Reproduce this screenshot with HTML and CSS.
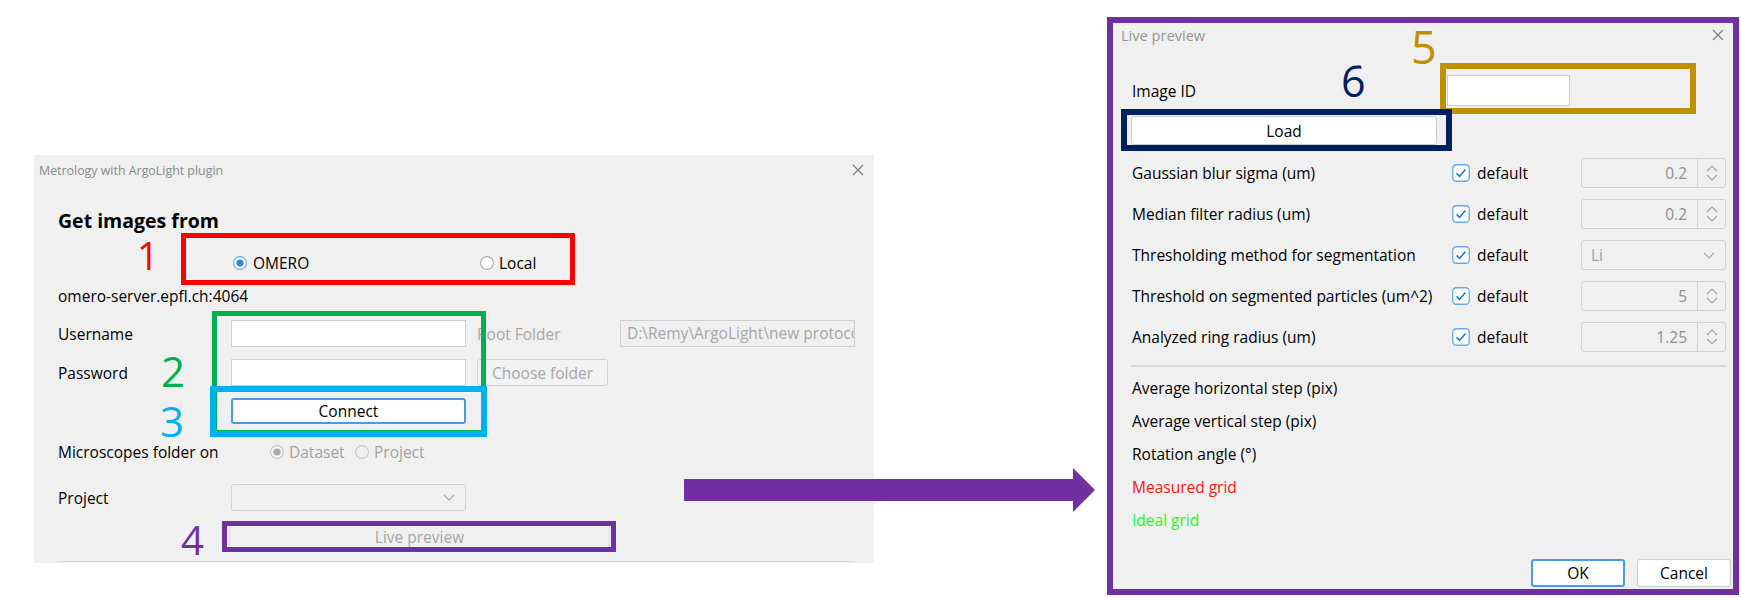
FILE: index.html
```html
<!DOCTYPE html>
<html>
<head>
<meta charset="utf-8">
<title>Metrology with ArgoLight plugin</title>
<link rel="stylesheet" href="styles.css">
</head>
<body>
<div class="canvas">

  <section class="dlg dlg-main">
    <header class="titlebar">
      <span class="title">Metrology with ArgoLight plugin</span>
      <svg class="close" width="12" height="12" viewBox="0 0 12 12"><path d="M1 1L11 11M11 1L1 11" stroke="#7a7a7a" stroke-width="1.1" fill="none"/></svg>
    </header>
    <div class="main-body">
      <div class="row r-get"><h2 class="heading">Get images from</h2></div>
      <div class="row r-radio">
        <span></span>
        <div class="radios">
          <span class="radio radio-omero"><svg width="14" height="14" viewBox="0 0 14 14"><circle cx="7" cy="7" r="6.4" fill="#fff" stroke="#6aa8ec" stroke-width="1.1"/><circle cx="7" cy="7" r="3.6" fill="#2f86e4"/></svg><span>OMERO</span></span>
          <span class="radio"><svg width="14" height="14" viewBox="0 0 14 14"><circle cx="7" cy="7" r="6.4" fill="#fff" stroke="#a8a8a8" stroke-width="1.1"/></svg><span>Local</span></span>
        </div>
      </div>
      <div class="row r-server"><span class="label-wide">omero-server.epfl.ch:4064</span></div>
      <div class="row r-user">
        <span>Username</span>
        <span class="input"></span>
        <span></span>
        <span class="muted">Root Folder</span>
        <span class="field-disabled">D:\Remy\ArgoLight\new protocol\images</span>
      </div>
      <div class="row r-pass">
        <span>Password</span>
        <span class="input"></span>
        <span></span>
        <span class="btn-disabled btn-choose">Choose folder</span>
      </div>
      <div class="row r-connect">
        <span></span>
        <span class="btn btn-focus btn-connect">Connect</span>
      </div>
      <div class="row r-micro">
        <span class="label-nowrap">Microscopes folder on</span>
        <div class="radios radios-disabled">
          <span class="radio radio-dataset"><svg width="14" height="14" viewBox="0 0 14 14"><circle cx="7" cy="7" r="6.4" fill="#f6f6f6" stroke="#c4c4c4" stroke-width="1.1"/><circle cx="7" cy="7" r="3.6" fill="#a9a9a9"/></svg><span>Dataset</span></span>
          <span class="radio"><svg width="14" height="14" viewBox="0 0 14 14"><circle cx="7" cy="7" r="6.4" fill="none" stroke="#c8c8c8" stroke-width="1.1"/></svg><span>Project</span></span>
        </div>
      </div>
      <div class="row r-project">
        <span>Project</span>
        <span class="combo combo-disabled combo-project"><span></span><svg width="12" height="7" viewBox="0 0 12 7"><path d="M1 1L6 6L11 1" stroke="#a6a6a6" stroke-width="1.1" fill="none"/></svg></span>
      </div>
      <div class="row r-live">
        <span></span>
        <span class="btn-disabled btn-live">Live preview</span>
      </div>
      <div class="separator sep-main"></div>
    </div>

    <div class="mark mark-red"></div>
    <div class="mark mark-green"></div>
    <div class="mark mark-blue"></div>
    <div class="mark mark-purple"></div>
    <span class="num num-1">1</span>
    <span class="num num-2">2</span>
    <span class="num num-3">3</span>
    <span class="num num-4">4</span>
  </section>

  <svg class="arrow" width="411" height="44" viewBox="0 0 411 44"><path d="M0 11H389V0L411 22L389 44V33H0Z" fill="#7030a0"/></svg>

  <section class="dlg dlg-preview">
    <header class="titlebar titlebar-preview">
      <span class="title title-preview">Live preview</span>
      <svg class="close" width="12" height="12" viewBox="0 0 12 12"><path d="M1 1L11 11M11 1L1 11" stroke="#7a7a7a" stroke-width="1.1" fill="none"/></svg>
    </header>
    <div class="preview-body">
      <div class="prow r-imageid">
        <span>Image ID</span>
        <span class="input input-id"></span>
      </div>
      <div class="prow r-load">
        <span class="btn btn-load">Load</span>
      </div>

      <div class="param r-first">
        <span>Gaussian blur sigma (um)</span>
        <span class="check"><svg width="18" height="18" viewBox="0 0 18 18"><rect x="0.75" y="0.75" width="16.5" height="16.5" rx="3.5" fill="#fff" stroke="#66a8ec" stroke-width="1.3"/><path d="M4.6 9.4L7.6 12.4L13.4 5.6" stroke="#1e74d8" stroke-width="1.6" fill="none"/></svg><span>default</span></span>
        <span class="spin"><span class="spin-val">0.2</span><span class="spin-btn"><svg width="12" height="18" viewBox="0 0 12 18"><path d="M1 7L6 2L11 7M1 11L6 16L11 11" stroke="#a3a3a3" stroke-width="1.1" fill="none"/></svg></span></span>
      </div>
      <div class="param">
        <span>Median filter radius (um)</span>
        <span class="check"><svg width="18" height="18" viewBox="0 0 18 18"><rect x="0.75" y="0.75" width="16.5" height="16.5" rx="3.5" fill="#fff" stroke="#66a8ec" stroke-width="1.3"/><path d="M4.6 9.4L7.6 12.4L13.4 5.6" stroke="#1e74d8" stroke-width="1.6" fill="none"/></svg><span>default</span></span>
        <span class="spin"><span class="spin-val">0.2</span><span class="spin-btn"><svg width="12" height="18" viewBox="0 0 12 18"><path d="M1 7L6 2L11 7M1 11L6 16L11 11" stroke="#a3a3a3" stroke-width="1.1" fill="none"/></svg></span></span>
      </div>
      <div class="param">
        <span>Thresholding method for segmentation</span>
        <span class="check"><svg width="18" height="18" viewBox="0 0 18 18"><rect x="0.75" y="0.75" width="16.5" height="16.5" rx="3.5" fill="#fff" stroke="#66a8ec" stroke-width="1.3"/><path d="M4.6 9.4L7.6 12.4L13.4 5.6" stroke="#1e74d8" stroke-width="1.6" fill="none"/></svg><span>default</span></span>
        <span class="combo combo-disabled combo-li"><span class="combo-val">Li</span><svg width="12" height="7" viewBox="0 0 12 7"><path d="M1 1L6 6L11 1" stroke="#a6a6a6" stroke-width="1.1" fill="none"/></svg></span>
      </div>
      <div class="param">
        <span>Threshold on segmented particles (um^2)</span>
        <span class="check"><svg width="18" height="18" viewBox="0 0 18 18"><rect x="0.75" y="0.75" width="16.5" height="16.5" rx="3.5" fill="#fff" stroke="#66a8ec" stroke-width="1.3"/><path d="M4.6 9.4L7.6 12.4L13.4 5.6" stroke="#1e74d8" stroke-width="1.6" fill="none"/></svg><span>default</span></span>
        <span class="spin"><span class="spin-val">5</span><span class="spin-btn"><svg width="12" height="18" viewBox="0 0 12 18"><path d="M1 7L6 2L11 7M1 11L6 16L11 11" stroke="#a3a3a3" stroke-width="1.1" fill="none"/></svg></span></span>
      </div>
      <div class="param">
        <span>Analyzed ring radius (um)</span>
        <span class="check"><svg width="18" height="18" viewBox="0 0 18 18"><rect x="0.75" y="0.75" width="16.5" height="16.5" rx="3.5" fill="#fff" stroke="#66a8ec" stroke-width="1.3"/><path d="M4.6 9.4L7.6 12.4L13.4 5.6" stroke="#1e74d8" stroke-width="1.6" fill="none"/></svg><span>default</span></span>
        <span class="spin"><span class="spin-val">1.25</span><span class="spin-btn"><svg width="12" height="18" viewBox="0 0 12 18"><path d="M1 7L6 2L11 7M1 11L6 16L11 11" stroke="#a3a3a3" stroke-width="1.1" fill="none"/></svg></span></span>
      </div>

      <div class="separator sep-preview"></div>

      <div class="results">
        <span class="result">Average horizontal step (pix)</span>
        <span class="result">Average vertical step (pix)</span>
        <span class="result">Rotation angle (°)</span>
        <span class="result result-red">Measured grid</span>
        <span class="result result-green">Ideal grid</span>
      </div>

      <div class="actions">
        <span class="btn btn-focus btn-action">OK</span>
        <span class="btn btn-action">Cancel</span>
      </div>
    </div>

    <div class="mark mark-gold"></div>
    <div class="mark mark-navy"></div>
    <span class="num num-5">5</span>
    <span class="num num-6">6</span>
  </section>

</div>
</body>
</html>
```

FILE: styles.css
```css
* { box-sizing: border-box; }
html, body { margin: 0; padding: 0; background: #fff; }
body { font-family: "Open Sans", "Noto Sans", sans-serif; color: #000; }

.canvas { position: relative; width: 1741px; height: 598px; overflow: hidden; }

/* dialogs: windows placed on a free canvas */
.dlg { position: absolute; background: #f0f0f0; }
.dlg-main { left: 34px; top: 155px; width: 840px; height: 408px; }
.dlg-preview { left: 1107px; top: 17px; width: 632px; height: 578px; border: 6px solid #7030a0; }

.titlebar { height: 30px; display: flex; align-items: center; justify-content: space-between; padding: 0 10px 0 5px; }
.titlebar-preview { height: 24px; padding: 0 9px 0 8px; }
.title { font-size: 12.4px; color: #8a8a8a; white-space: nowrap; }
.title-preview { font-size: 14.6px; color: #959595; }
.close { display: block; }

/* main dialog body */
.main-body { display: flex; flex-direction: column; padding-left: 24px; font-size: 15.5px; }
.row { display: grid; grid-template-columns: 173px 235px 11px 143px 235px; align-items: center; justify-items: start; }
.r-get { margin-top: 19px; height: 34px; }
.r-radio { margin-top: 8px; height: 34px; }
.r-server { margin-top: 4px; height: 24px; }
.r-user { margin-top: 12px; height: 27px; }
.r-pass { margin-top: 12px; height: 27px; }
.r-connect { margin-top: 12px; height: 26px; }
.r-micro { margin-top: 16px; height: 24px; }
.r-project { margin-top: 20px; height: 27px; }
.r-live { margin-top: 14px; height: 23px; }

.heading { margin: 0; font-size: 19.5px; font-weight: 700; line-height: 1.2; white-space: nowrap; grid-column: 1 / span 2; }
.label-wide { grid-column: 1 / span 3; white-space: nowrap; }
.label-nowrap { white-space: nowrap; }
.muted { color: #a6a6a6; white-space: nowrap; }

.radios { display: flex; align-items: center; padding-left: 2px; grid-column: 2 / span 3; }
.radio { display: flex; align-items: center; gap: 5px; white-space: nowrap; }
.radio svg { display: block; flex: none; }
.radio-omero { width: 247px; gap: 6px; }
.radios-disabled { padding-left: 39px; color: #a3a3a3; }
.radio-dataset { width: 85px; }

.input { display: block; width: 100%; height: 100%; background: #fff; border: 1px solid #cfcfcf; }
.field-disabled { display: block; width: 100%; height: 100%; border: 1px solid #cfcfcf; color: #a6a6a6; padding: 0 6px; line-height: 25px; white-space: nowrap; overflow: hidden; }

.btn { display: flex; align-items: center; justify-content: center; width: 100%; height: 100%; background: #fff; border: 1px solid #cdcdcd; border-radius: 3px; white-space: nowrap; }
.btn-focus { border: 2px solid #4b98e9; }
.btn-disabled { display: flex; align-items: center; justify-content: center; height: 100%; border: 1px solid #d2d2d2; border-radius: 3px; color: #a6a6a6; white-space: nowrap; }
.btn-choose { width: 131px; background: #f3f3f3; }
.btn-live { margin-left: -2px; width: 381px; grid-column: 2 / span 4; border-radius: 0; border-color: #dcdcdc; }

.combo { display: flex; align-items: center; justify-content: space-between; width: 100%; height: 100%; border: 1px solid #d2d2d2; border-radius: 3px; padding: 0 10px 0 9px; }
.combo svg { display: block; }
.combo-val { color: #a3a3a3; }

.separator { height: 2px; background: #d9d9d9; }
.sep-main { margin-top: 13px; margin-left: -1px; width: 798px; height: 1px; background: #d6d6d6; }

/* preview dialog body */
.preview-body { display: flex; flex-direction: column; padding-left: 19px; font-size: 15.5px; }
.prow { display: grid; grid-template-columns: 315px 123px; align-items: center; }
.r-imageid { margin-top: 28px; height: 31px; }
.r-load { margin-top: 10px; height: 29px; grid-template-columns: 306px; margin-left: -1px; }
.input-id { border-color: #cdcdcd; }

.param { display: grid; grid-template-columns: 320px 129px 145px; align-items: center; height: 30px; margin-top: 11px; }
.param.r-first { margin-top: 13px; }

.check { display: flex; align-items: center; gap: 7px; }
.check svg { display: block; flex: none; }

.spin { display: flex; height: 30px; border: 1px solid #d2d2d2; border-radius: 3px; }
.spin-val { flex: 1; display: flex; align-items: center; justify-content: flex-end; padding-right: 10px; color: #8f8f8f; }
.spin-btn { width: 28px; border-left: 1px solid #d2d2d2; display: flex; align-items: center; justify-content: center; }
.spin-btn svg { display: block; }
.combo-li { height: 30px; }

.sep-preview { margin-top: 13px; margin-left: -1px; width: 595px; }

.results { display: flex; flex-direction: column; margin-top: 4px; }
.result { height: 33px; display: flex; align-items: center; }
.result-red { color: #ff1414; }
.result-green { color: #14ff14; }

.actions { display: flex; justify-content: flex-end; gap: 12px; margin-top: 23px; padding-right: 2px; height: 28px; }
.btn-action { width: 94px; }

/* annotation overlays */
.mark { position: absolute; }
.mark-red { left: 147px; top: 78px; width: 394px; height: 52px; border: 5px solid #ff0000; }
.mark-green { left: 178px; top: 156px; width: 274px; height: 124px; border: 5px solid #00b050; }
.mark-blue { left: 176px; top: 231px; width: 277px; height: 51px; border: 6px solid #00b0f0; }
.mark-purple { left: 188px; top: 366px; width: 394px; height: 31px; border: 5px solid #7030a0; }
.mark-gold { left: 327px; top: 40px; width: 256px; height: 51px; border: 6px solid #bf9000; }
.mark-navy { left: 8px; top: 86px; width: 331px; height: 42px; border: 6px solid #002060; }

.num { position: absolute; line-height: 0.75; font-family: "Open Sans", "Noto Sans", sans-serif; }
.num-1 { left: 103px; top: 86px; font-size: 38px; color: #ff0000; }
.num-2 { left: 127px; top: 200px; font-size: 42px; color: #00b050; }
.num-3 { left: 126px; top: 250px; font-size: 42px; color: #00b0f0; }
.num-4 { left: 147px; top: 370px; font-size: 40px; color: #7030a0; }
.num-5 { left: 298px; top: 7px; font-size: 45px; color: #bf9000; }
.num-6 { left: 228px; top: 42px; font-size: 43px; color: #002060; }

.arrow { position: absolute; left: 684px; top: 468px; display: block; }
```
